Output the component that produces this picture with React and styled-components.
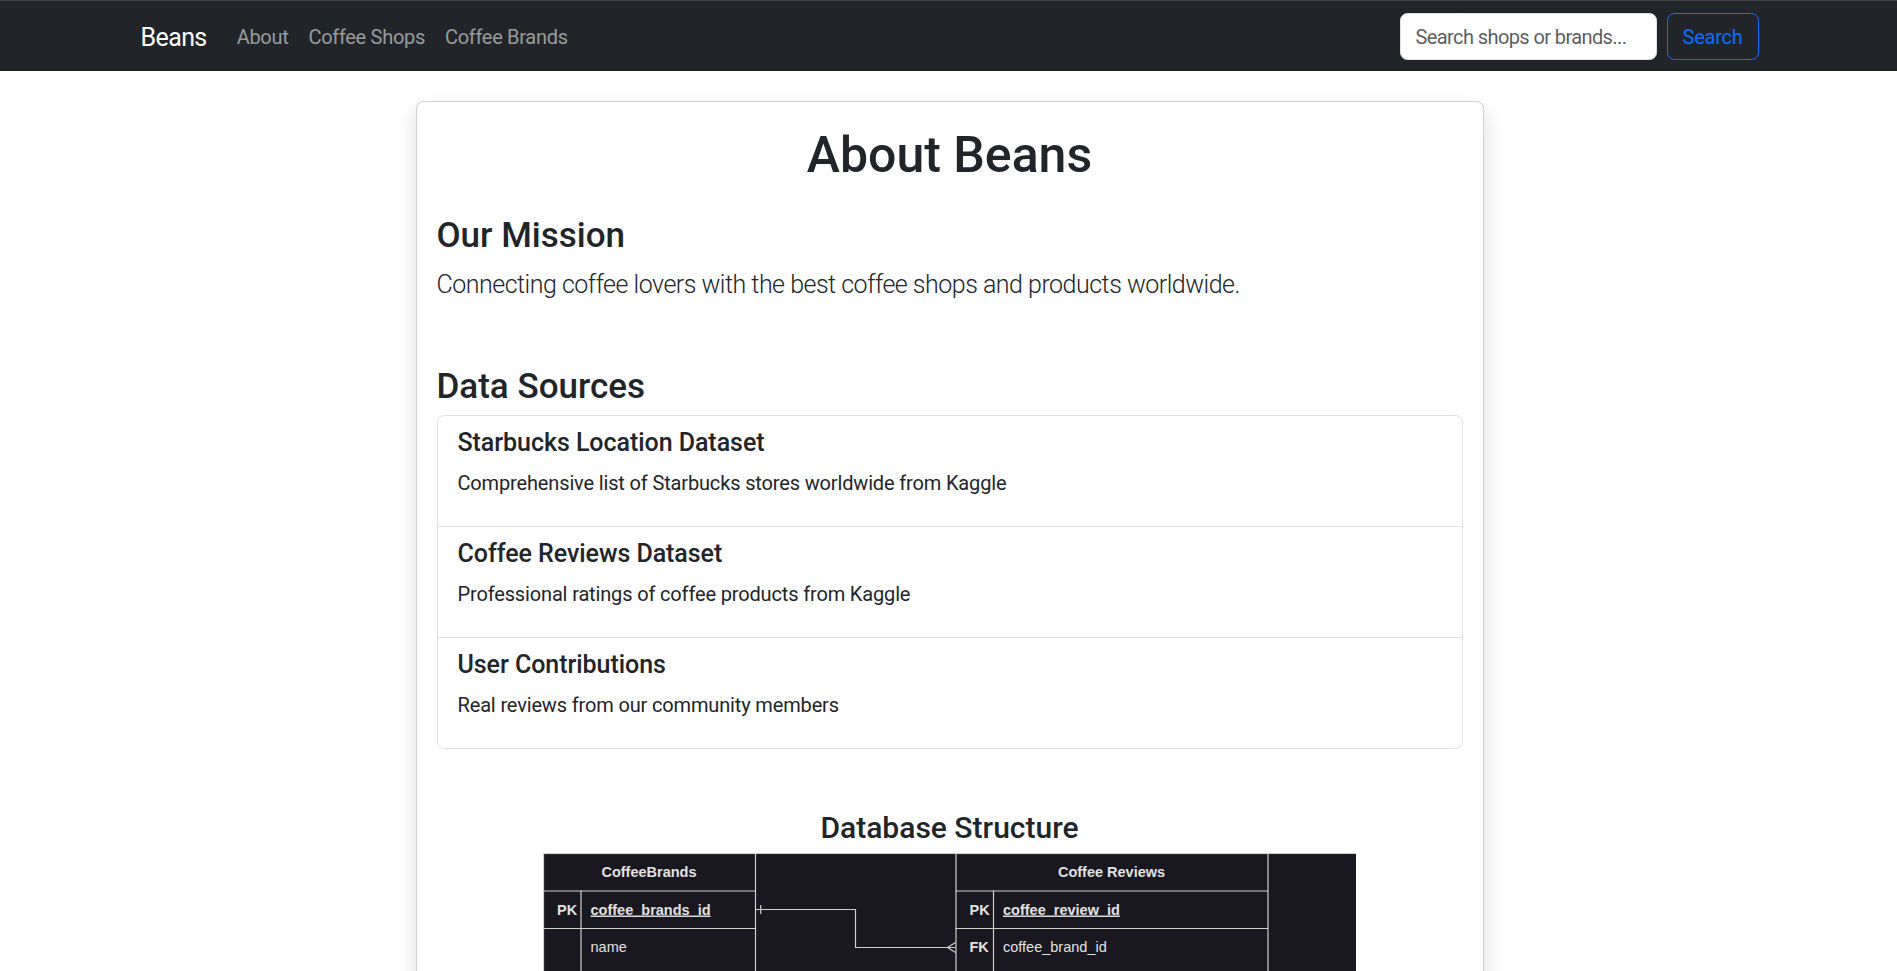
import React from "react";
import styled, { createGlobalStyle } from "styled-components";

const GlobalStyle = createGlobalStyle`
  *, *::before, *::after { box-sizing: border-box; }
  html, body { margin: 0; padding: 0; }
  body {
    font-family: Roboto, "Segoe UI", "Liberation Sans", sans-serif;
    font-size: 20px;
    line-height: 1.5;
    color: #212529;
    background: #ffffff;
    -webkit-font-smoothing: antialiased;
  }
`;

const Navbar = styled.nav`
  background: #212529;
  border-top: 1px solid #3f4246;
  height: 71px;
  display: flex;
  align-items: center;
`;

const NavContainer = styled.div`
  width: 1650px;
  max-width: 100%;
  margin: 0 auto;
  padding: 1px 15px 0;
  display: flex;
  align-items: center;
  justify-content: space-between;
`;

const NavLeft = styled.div`
  display: flex;
  align-items: center;
`;

const Brand = styled.a`
  font-size: 25px;
  line-height: 1.5;
  letter-spacing: -0.6px;
  color: #ffffff;
  text-decoration: none;
  margin-right: 20px;
  padding: 7px 0 5px 2px;
`;

const NavLink = styled.a`
  font-size: 20px;
  line-height: 1.5;
  letter-spacing: -0.3px;
  color: rgba(255, 255, 255, 0.55);
  text-decoration: none;
  padding: 10.5px 10px 9.5px;
`;

const SearchForm = styled.form`
  display: flex;
  align-items: center;
  gap: 10px;
`;

const SearchInput = styled.input`
  width: 257px;
  height: 47.5px;
  padding: 8px 12px 7px 15px;
  font-family: inherit;
  font-size: 20px;
  line-height: 1.5;
  letter-spacing: -0.6px;
  color: #212529;
  background: #ffffff;
  border: 1px solid #dee2e6;
  border-radius: 7.5px;
  outline: none;
  &::placeholder {
    color: rgba(33, 37, 41, 0.75);
  }
`;

const OutlineButton = styled.button`
  height: 47.5px;
  padding: 8px 15px 7px;
  font-family: inherit;
  font-size: 20px;
  line-height: 1.5;
  letter-spacing: -0.25px;
  color: #0d6efd;
  background: transparent;
  border: 1px solid #0d6efd;
  border-radius: 7.5px;
  cursor: pointer;
`;

const Main = styled.main`
  display: flex;
  justify-content: center;
  padding: 30px 0 0 2px;
`;

const Card = styled.section`
  width: 1068px;
  background: #ffffff;
  border: 1px solid rgba(0, 0, 0, 0.175);
  border-radius: 7.5px;
  box-shadow: 0 10px 20px rgba(0, 0, 0, 0.15);
`;

const CardBody = styled.div`
  padding: 20px;
`;

const PageTitle = styled.h1`
  font-size: 50px;
  font-weight: 500;
  line-height: 1.2;
  text-align: center;
  padding-top: 2.5px;
  margin: 0 0 27.5px;
`;

const Section = styled.div`
  margin-bottom: ${(p) => p.$mb || 0}px;
  margin-top: ${(p) => p.$mt || 0}px;
  text-align: ${(p) => (p.$center ? "center" : "left")};
`;

const SectionTitle = styled.h3`
  font-size: 35px;
  font-weight: 500;
  line-height: 1.2;
  padding-top: 2.5px;
  margin: 0 0 7.5px;
`;

const Lead = styled.p`
  font-size: 25px;
  font-weight: 300;
  line-height: 1.5;
  letter-spacing: -0.5px;
  padding-top: 1.8px;
  margin: 0;
`;

const ListGroup = styled.ul`
  list-style: none;
  margin: 0;
  padding: 0;
  border: 1px solid #dee2e6;
  border-radius: 7.5px;
`;

const ListItem = styled.li`
  padding: 10px 20px;
  border-bottom: 1px solid #dee2e6;
  &:last-child {
    border-bottom: none;
  }
`;

const ItemTitle = styled.h5`
  font-size: 25px;
  font-weight: 500;
  line-height: 1.2;
  letter-spacing: -0.05px;
  padding-top: 1.8px;
  margin: 0 0 8.2px;
`;

const ItemText = styled.p`
  font-size: 20px;
  line-height: 1.5;
  letter-spacing: -0.15px;
  padding-top: 1.4px;
  margin: 0 0 18.6px;
`;

const DiagramTitle = styled.h4`
  font-size: 30px;
  font-weight: 500;
  line-height: 1.2;
  padding-top: 2px;
  margin: 0 0 7px;
`;

const DiagramSvg = styled.svg`
  display: block;
  margin: 0 auto;
`;

const sources = [
  {
    title: "Starbucks Location Dataset",
    text: "Comprehensive list of Starbucks stores worldwide from Kaggle",
  },
  {
    title: "Coffee Reviews Dataset",
    text: "Professional ratings of coffee products from Kaggle",
  },
  {
    title: "User Contributions",
    text: "Real reviews from our community members",
  },
];

const LINE = "#cfcfcf";
const TXT = "#e2e2e2";
const ROW = 37.5;
const SVG_H = 160;

function EntityTable({ x, width, keyCol, title, rows }) {
  const bodyBottom = SVG_H + 10;
  return (
    <g>
      <rect
        x={x + 0.5}
        y={0.5}
        width={width}
        height={bodyBottom}
        fill="none"
        stroke={LINE}
        strokeWidth="1.2"
      />
      <text
        x={x + width / 2}
        y={24}
        textAnchor="middle"
        fill={TXT}
        fontFamily="'Liberation Sans', Arial, sans-serif"
        fontSize="14.5"
        fontWeight="700"
      >
        {title}
      </text>
      <line
        x1={x + keyCol + 0.5}
        y1={ROW}
        x2={x + keyCol + 0.5}
        y2={bodyBottom}
        stroke={LINE}
        strokeWidth="1.2"
      />
      {rows.map((r, i) => {
        const top = ROW * (i + 1);
        const base = top + 24;
        return (
          <g key={r.name}>
            <line
              x1={x}
              y1={top + 0.5}
              x2={x + width + 0.5}
              y2={top + 0.5}
              stroke={LINE}
              strokeWidth="1.2"
            />
            {r.key && (
              <text
                x={x + 14}
                y={base}
                fill={TXT}
                fontFamily="'Liberation Sans', Arial, sans-serif"
                fontSize="14.5"
                fontWeight="700"
              >
                {r.key}
              </text>
            )}
            <text
              x={x + keyCol + 10}
              y={base}
              fill={TXT}
              fontFamily="'Liberation Sans', Arial, sans-serif"
              fontSize="14.5"
              fontWeight={r.pk ? "700" : "400"}
              textDecoration={r.pk ? "underline" : "none"}
            >
              {r.name}
            </text>
          </g>
        );
      })}
    </g>
  );
}

function ErDiagram() {
  return (
    <DiagramSvg
      width="813"
      height={SVG_H}
      viewBox={`0 0 813 ${SVG_H}`}
      role="img"
      aria-label="Database structure diagram"
    >
      <rect x="0" y="0" width="813" height={SVG_H} fill="#19171f" />
      <line x1="0" y1="0.5" x2="813" y2="0.5" stroke={LINE} strokeWidth="1" />
      <EntityTable
        x={0}
        width={212}
        keyCol={37.5}
        title="CoffeeBrands"
        rows={[
          { key: "PK", name: "coffee_brands_id", pk: true },
          { name: "name" },
        ]}
      />
      <EntityTable
        x={412.5}
        width={312}
        keyCol={37.5}
        title="Coffee Reviews"
        rows={[
          { key: "PK", name: "coffee_review_id", pk: true },
          { key: "FK", name: "coffee_brand_id" },
        ]}
      />
      <g fill="none" stroke={LINE} strokeWidth="1.2">
        <polyline points="213,56.5 312.5,56.5 312.5,94.5 412.5,94.5" />
        <line x1="217.7" y1="52" x2="217.7" y2="61" />
        <polyline points="412.5,89.5 404.5,94.5 412.5,99.5" />
      </g>
    </DiagramSvg>
  );
}

export default function App() {
  return (
    <>
      <GlobalStyle />
      <Navbar>
        <NavContainer>
          <NavLeft>
            <Brand href="#">Beans</Brand>
            <NavLink href="#">About</NavLink>
            <NavLink href="#">Coffee Shops</NavLink>
            <NavLink href="#">Coffee Brands</NavLink>
          </NavLeft>
          <SearchForm onSubmit={(e) => e.preventDefault()}>
            <SearchInput type="search" placeholder="Search shops or brands..." />
            <OutlineButton type="submit">Search</OutlineButton>
          </SearchForm>
        </NavContainer>
      </Navbar>
      <Main>
        <Card>
          <CardBody>
            <PageTitle>About Beans</PageTitle>
            <Section $mb={60}>
              <SectionTitle>Our Mission</SectionTitle>
              <Lead>Connecting coffee lovers with the best coffee shops and products worldwide.</Lead>
            </Section>
            <Section>
              <SectionTitle>Data Sources</SectionTitle>
              <ListGroup>
                {sources.map((s) => (
                  <ListItem key={s.title}>
                    <ItemTitle>{s.title}</ItemTitle>
                    <ItemText>{s.text}</ItemText>
                  </ListItem>
                ))}
              </ListGroup>
            </Section>
            <Section $mt={59} $center>
              <DiagramTitle>Database Structure</DiagramTitle>
              <ErDiagram />
            </Section>
          </CardBody>
        </Card>
      </Main>
    </>
  );
}
